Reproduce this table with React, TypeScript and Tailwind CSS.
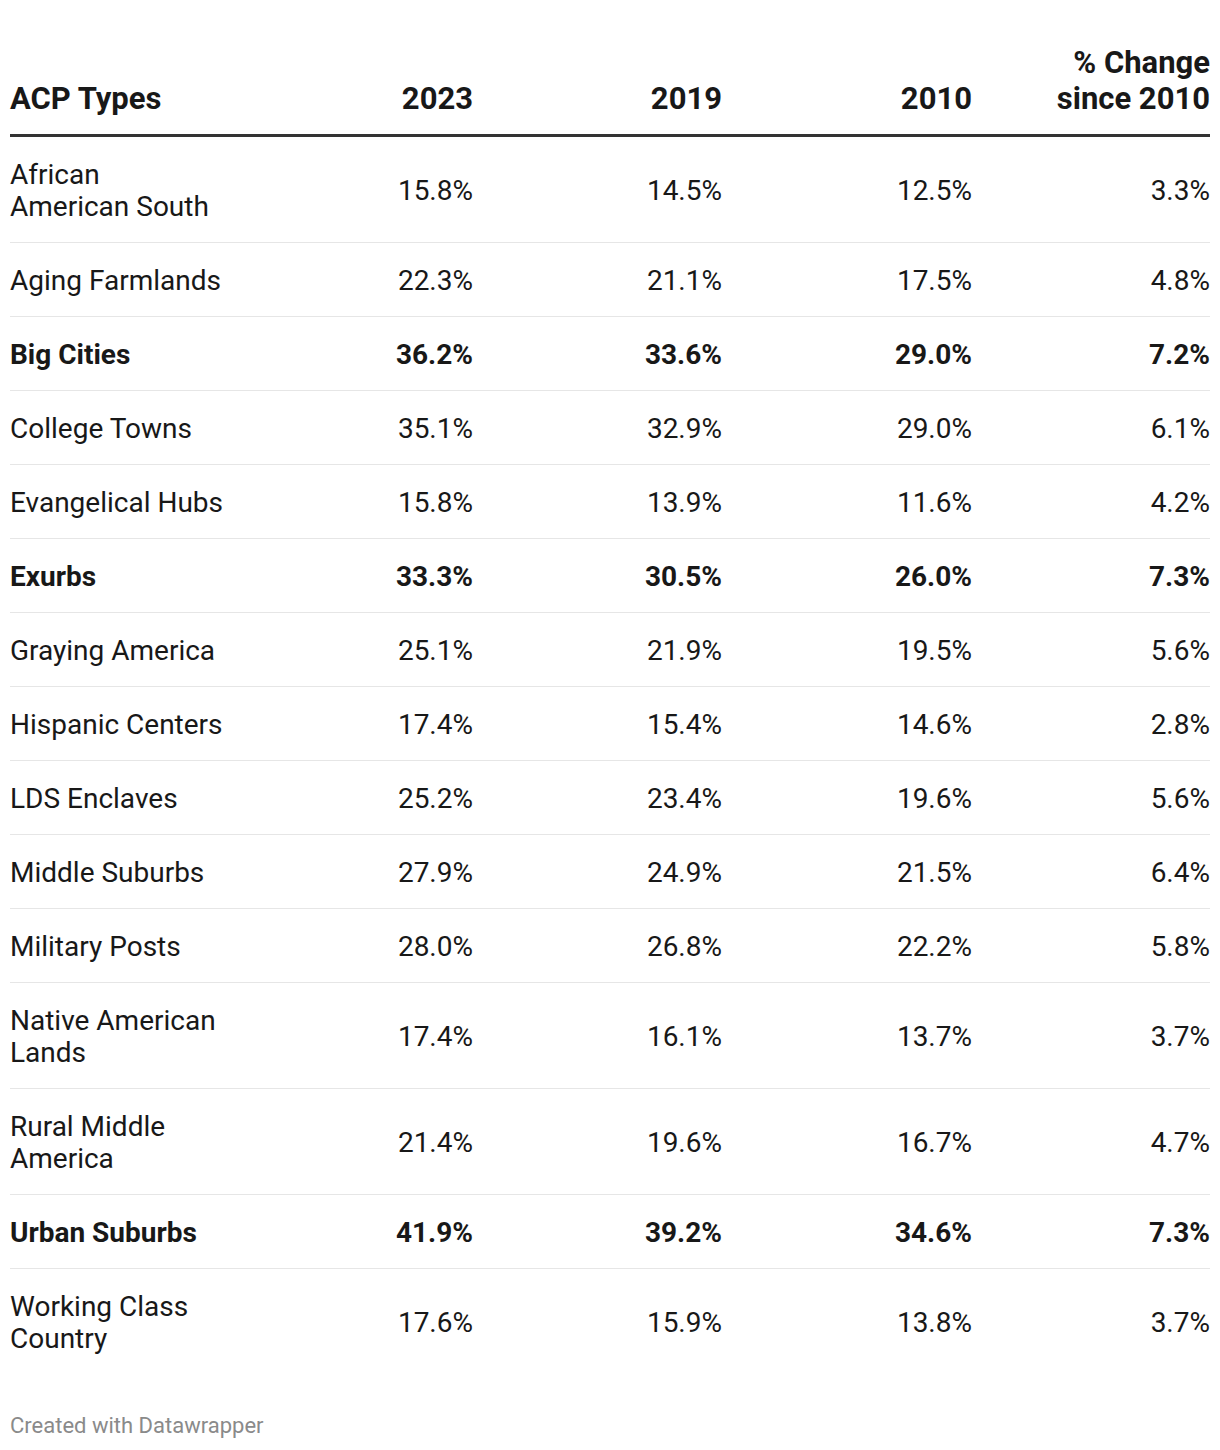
import React from "react";

type Row = { name: React.ReactNode; v: string[]; bold?: boolean };

const rows: Row[] = [
  { name: <>African<br />American South</>, v: ["15.8%", "14.5%", "12.5%", "3.3%"] },
  { name: "Aging Farmlands", v: ["22.3%", "21.1%", "17.5%", "4.8%"] },
  { name: "Big Cities", v: ["36.2%", "33.6%", "29.0%", "7.2%"], bold: true },
  { name: "College Towns", v: ["35.1%", "32.9%", "29.0%", "6.1%"] },
  { name: "Evangelical Hubs", v: ["15.8%", "13.9%", "11.6%", "4.2%"] },
  { name: "Exurbs", v: ["33.3%", "30.5%", "26.0%", "7.3%"], bold: true },
  { name: "Graying America", v: ["25.1%", "21.9%", "19.5%", "5.6%"] },
  { name: "Hispanic Centers", v: ["17.4%", "15.4%", "14.6%", "2.8%"] },
  { name: "LDS Enclaves", v: ["25.2%", "23.4%", "19.6%", "5.6%"] },
  { name: "Middle Suburbs", v: ["27.9%", "24.9%", "21.5%", "6.4%"] },
  { name: "Military Posts", v: ["28.0%", "26.8%", "22.2%", "5.8%"] },
  { name: <>Native American<br />Lands</>, v: ["17.4%", "16.1%", "13.7%", "3.7%"] },
  { name: <>Rural Middle<br />America</>, v: ["21.4%", "19.6%", "16.7%", "4.7%"] },
  { name: "Urban Suburbs", v: ["41.9%", "39.2%", "34.6%", "7.3%"], bold: true },
  { name: <>Working Class<br />Country</>, v: ["17.6%", "15.9%", "13.8%", "3.7%"] },
];

export default function App() {
  return (
    <div className="w-[1220px] h-[1450px] bg-white text-[#181818] px-[10px]" style={{ fontFamily: "Roboto, sans-serif" }}>
      <div className="grid grid-cols-[213px_250px_249px_250px_238px] items-end pt-[45px] pb-[17px] border-b-[3px] border-[#333333] text-[31px] leading-[36px] font-bold">
        <div className="whitespace-nowrap">ACP Types</div>
        <div className="text-right">2023</div>
        <div className="text-right">2019</div>
        <div className="text-right">2010</div>
        <div className="text-right whitespace-nowrap">% Change<br />since 2010</div>
      </div>
      <div className="text-[28px] leading-[32px]">
        {rows.map((r, i) => (
          <div
            key={i}
            className={
              "grid grid-cols-[213px_250px_249px_250px_238px] items-center pt-[22px] pb-[19px] " +
              (i < rows.length - 1 ? "border-b border-[#e6e6e6] " : "") +
              (r.bold ? "font-bold" : "")
            }
          >
            <div className="whitespace-nowrap">{r.name}</div>
            {r.v.map((x, j) => (
              <div key={j} className="text-right">{x}</div>
            ))}
          </div>
        ))}
      </div>
      <div className="pt-[38px] text-[22px] leading-[28px] text-[#8a8a8a]">Created with Datawrapper</div>
    </div>
  );
}
